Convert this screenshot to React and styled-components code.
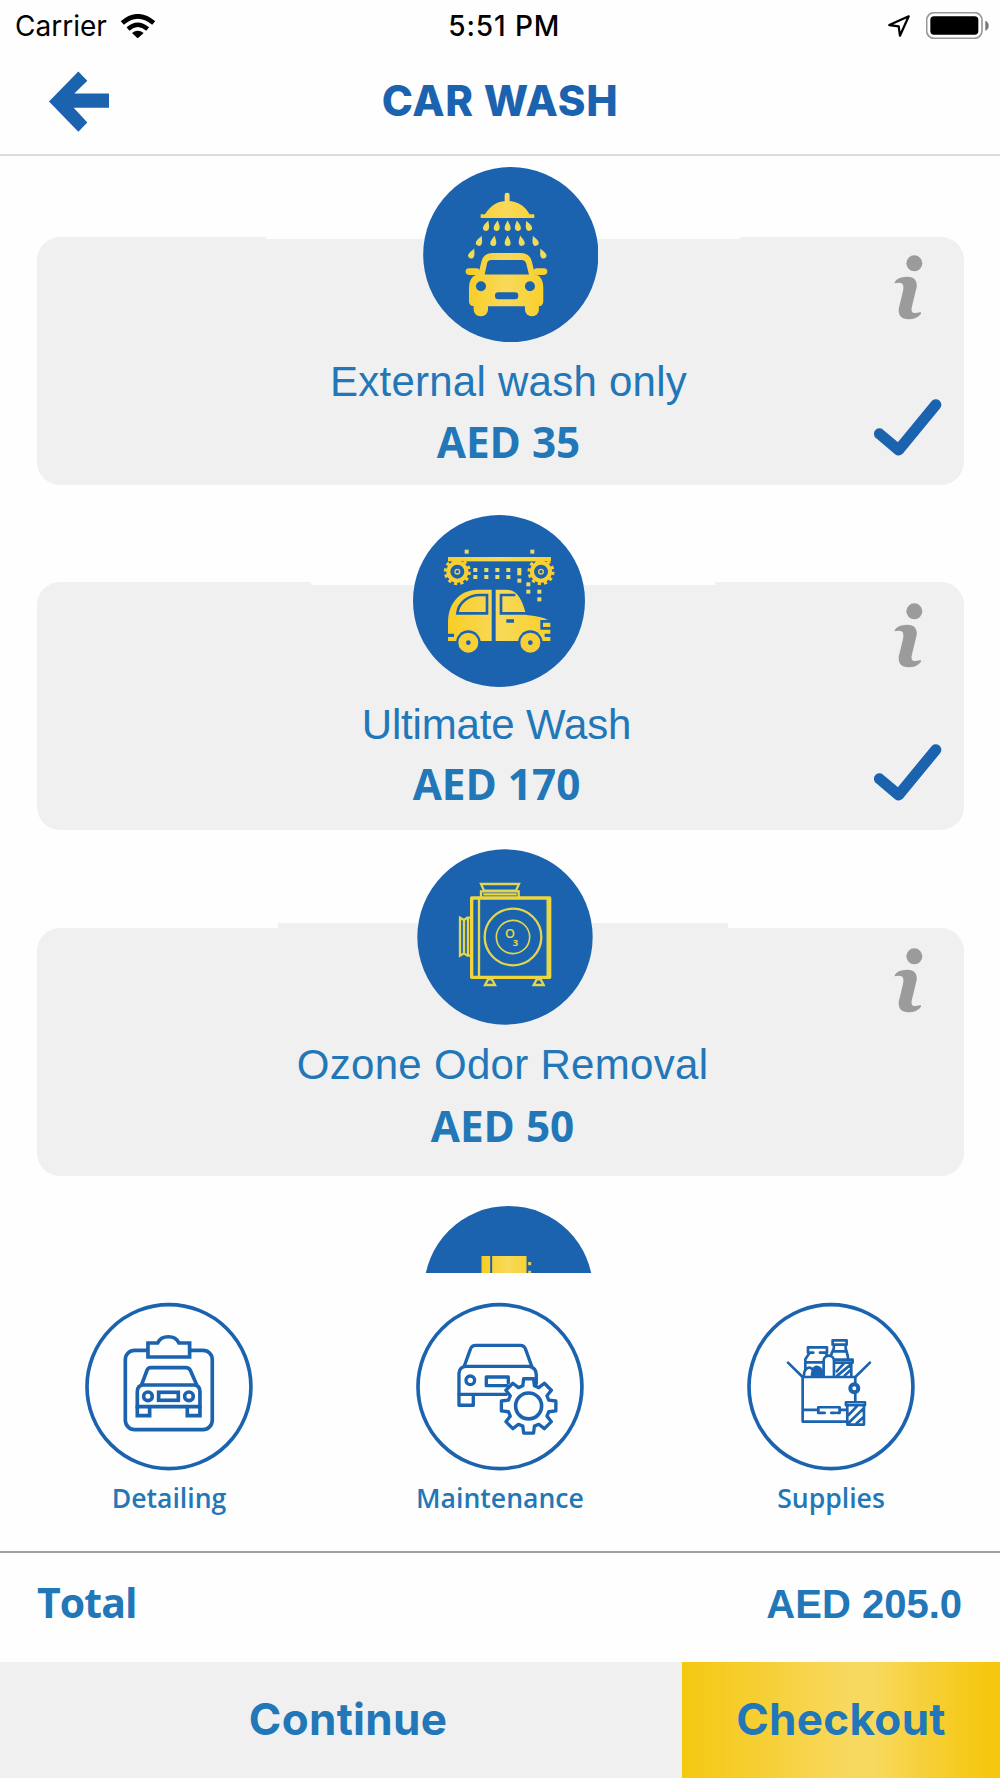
import React from "react"
import styled, { createGlobalStyle, ThemeProvider } from "styled-components"

const theme = {
  color: {
    primary: "#1b63af",
    text: "#2277b8",
    card: "#f0f0f0",
    info: "#9b9b9b",
    gold: "#f8d035",
  },
  font: {
    system: '"Inter", "Liberation Sans", sans-serif',
    body: '"Open Sans", "Noto Sans", sans-serif',
    light: '"Liberation Sans", Arial, sans-serif',
  },
}

const GlobalStyle = createGlobalStyle`
  * {
    box-sizing: border-box;
  }
  body {
    margin: 0;
    background: #fefefe;
  }
  svg {
    display: block;
    flex-shrink: 0;
  }
`

const Screen = styled.div`
  display: flex;
  flex-direction: column;
  width: 1000px;
  height: 1778px;
  overflow: hidden;
  font-family: ${props => props.theme.font.system};
`

const StatusBar = styled.div`
  display: grid;
  grid-template-columns: 1fr auto 1fr;
  align-items: center;
  height: 51px;
  padding: 0 11.5px 0 15px;
  font-size: 28px;
  line-height: 36px;
  color: #000;
`

const StatusGroup = styled.div`
  display: flex;
  align-items: center;
  justify-content: ${props => (props.$end ? "flex-end" : "flex-start")};
  gap: ${props => props.$gap}px;
`

const Clock = styled.div`
  margin-left: 5px;
  font-weight: 550;
  letter-spacing: 0.9px;
`

const Header = styled.header`
  display: grid;
  grid-template-columns: 120px 1fr 120px;
  align-items: center;
  height: 105px;
  padding-bottom: 3px;
  border-bottom: 2px solid #dcdcdc;
`

const BackButton = styled.button`
  padding: 0 0 0 49px;
  border: 0;
  background: none;
`

const Title = styled.h1`
  margin: 0;
  font-size: 42px;
  font-weight: 800;
  line-height: 50px;
  letter-spacing: 0.7px;
  text-align: center;
  color: ${props => props.theme.color.primary};
`

const ServiceList = styled.main`
  display: flex;
  flex-direction: column;
  gap: 97.33px;
  height: 1117px;
  padding: 81px 36.5px 0;
  overflow: hidden;
`

const Card = styled.section`
  position: relative;
  display: grid;
  grid-template-columns: 110px 1fr 110px;
  flex-shrink: 0;
  height: 248px;
  border-radius: 23px;
  background: ${props => props.theme.color.card};

  /* the edge of the artwork shows on the top of each card */
  &::before {
    content: "";
    position: absolute;
    top: ${props => (props.$edge.raised ? -props.$edge.height : 0)}px;
    left: ${props => props.$edge.left}px;
    width: ${props => props.$edge.width}px;
    height: ${props => props.$edge.height}px;
    background: ${props => (props.$edge.raised ? props.theme.color.card : "#fefefe")};
  }
`

const CardBody = styled.div`
  position: relative;
  grid-column: 2;
  display: flex;
  flex-direction: column;
  align-items: center;
  margin-top: ${props => props.$lift}px;
  margin-left: ${props => props.$shift * 2}px;
`

const Artwork = styled.div`
  margin-left: ${props => props.$shift * 2}px;
`

const CardActions = styled.div`
  grid-column: 3;
  display: flex;
  flex-direction: column;
  align-items: flex-end;
  justify-content: space-between;
  padding: ${props => props.$top}px 21.5px 29.5px 0;
`

const InfoSlot = styled.div`
  padding-right: 19px;
`

const ServiceName = styled.h2`
  margin: ${props => props.$gap}px 0 0;
  font-family: ${props => props.theme.font.light};
  font-size: 42px;
  font-weight: 400;
  line-height: 50px;
  letter-spacing: ${props => props.$spacing}px;
  white-space: nowrap;
  color: ${props => props.theme.color.text};
`

const Price = styled.div`
  margin-top: ${props => props.$gap}px;
  font-family: ${props => props.theme.font.body};
  font-size: 42.3px;
  font-weight: 700;
  line-height: 50px;
  color: ${props => props.theme.color.text};
`

const Categories = styled.nav`
  display: grid;
  grid-template-columns: repeat(3, 331px);
  justify-content: center;
  height: 278px;
  padding-top: 29px;
`

const Category = styled.div`
  display: flex;
  flex-direction: column;
  align-items: center;
`

const CategoryName = styled.span`
  margin-top: 9px;
  font-family: ${props => props.theme.font.body};
  font-size: 26.6px;
  font-weight: 600;
  line-height: 36px;
  color: ${props => props.theme.color.text};
`

const TotalRow = styled.div`
  display: flex;
  align-items: baseline;
  justify-content: space-between;
  height: 111px;
  padding: 21px 38px 0 37px;
  border-top: 2px solid #a0a0a0;
  color: ${props => props.theme.color.text};
`

const TotalLabel = styled.span`
  font-family: ${props => props.theme.font.body};
  font-size: 41px;
  font-weight: 700;
  line-height: 56px;
  letter-spacing: -0.9px;
`

const TotalValue = styled.span`
  font-family: ${props => props.theme.font.light};
  font-size: 40px;
  font-weight: 700;
  line-height: 56px;
`

const Footer = styled.footer`
  display: grid;
  grid-template-columns: 682px 318px;
  height: 116px;
`

const FooterButton = styled.button`
  border: 0;
  padding: 0 0 2px ${props => props.$inset || 0}px;
  background: ${props =>
    props.$gold
      ? "linear-gradient(90deg, #f5c812 0%, #f6cf35 25%, #f8d95f 52%, #f8d95f 60%, #f6cf35 78%, #f5c80f 96%)"
      : props.theme.color.card};
  font-family: ${props => props.theme.font.system};
  font-size: 44px;
  font-weight: 700;
  line-height: 50px;
  letter-spacing: 0.3px;
  color: ${props => props.theme.color.text};
`

const WifiIcon = () => (
  <svg width="34" height="24" viewBox="363 36 102 72" fill="none" stroke="#000">
    <path d="M367 63 Q413 23 461 63" strokeWidth="14" />
    <path d="M384 81 Q413 56 443 81" strokeWidth="13" />
    <path d="M396 93 Q413 79 431 93 L413 109 Z" fill="#000" stroke="none" />
  </svg>
)

const LocationIcon = () => (
  <svg width="22" height="22" viewBox="1163 40 68 68" fill="none" stroke="#000" strokeWidth="7" strokeLinejoin="round">
    <path d="M1227 44 L1167 71 L1196 75 L1200 104 Z" />
  </svg>
)

const BatteryIcon = () => (
  <svg width="63" height="27" viewBox="1276 32 189 81">
    <rect x="1278" y="34" width="166" height="77" rx="22" fill="none" stroke="#999" strokeWidth="5" />
    <rect x="1289" y="45" width="144" height="55" rx="11" />
    <path d="M1454 58 Q1464 62 1464 73 Q1464 84 1454 88 Z" fill="#777" />
  </svg>
)

const BackIcon = () => (
  <svg width="60" height="61" viewBox="147 214 180 182" fill={theme.color.primary}>
    <path d="M147 305 L235 215 L262 243 L223 281 H327 V324 H221 L262 368 L235 396 Z" />
  </svg>
)

const InfoIcon = () => (
  <svg width="29" height="65" viewBox="163 104 87 195" fill={theme.color.info}>
    <circle cx="224" cy="129" r="24" />
    <path d="M165 186 Q172 170 203 169 Q234 170 231 200 L216 262 Q213 277 225 278 Q234 278 243 275 L244 280 Q232 297 206 297 Q175 296 177 266 L190 212 Q194 194 186 189 Q178 185 165 189 Z" />
  </svg>
)

const CheckIcon = () => (
  <svg width="68" height="57" viewBox="104 536 202 170" fill="none">
    <path
      d="M120 640 L177 688 L288 553"
      stroke={theme.color.primary}
      strokeWidth="33"
      strokeLinecap="round"
      strokeLinejoin="round"
    />
  </svg>
)

const GoldGradient = ({ id, from, to }) => (
  <defs>
    <linearGradient id={id} gradientUnits="userSpaceOnUse" x1={from} x2={to} y1="0" y2="0">
      <stop offset="0" stopColor="#f8cd22" />
      <stop offset="0.5" stopColor="#f8d95a" />
      <stop offset="1" stopColor="#f9cf26" />
    </linearGradient>
  </defs>
)

const drops = [
  [261, 212, 18], [292, 212, 8], [324, 212, 0], [354, 212, -8], [386, 212, -22],
  [240, 257, 22], [282, 257, 10], [324, 257, 0], [365, 257, -12], [406, 257, -22],
  [217, 295, 24], [429, 295, -24],
]

const ExternalWashIcon = () => (
  <svg width="175.6" height="175.6" viewBox="70 35 527 527">
    <GoldGradient id="external" from="198" to="443" />
    <circle cx="333.5" cy="298" r="263" fill={theme.color.primary} />
    <g fill="url(#external)">
      <rect x="315" y="112" width="15" height="32" rx="7" />
      <path d="M243 177 H256 Q280 137 323 137 Q367 137 390 177 H404 V188 H243 Z" />
      <rect x="198" y="339" width="42" height="20" rx="10" />
      <rect x="402" y="339" width="41" height="20" rx="10" />
      <path d="M234 365 L245 320 Q251 293 280 293 H362 Q391 293 397 320 L408 365 Z" />
      <path d="M232 357 H409 Q431 366 431 397 V438 Q431 453 416 453 H224 Q208 453 208 438 V397 Q208 366 232 357 Z" />
      <rect x="222" y="430" width="43" height="53" rx="20" />
      <rect x="376" y="430" width="42" height="53" rx="20" />
    </g>
    <g fill="#f1dc57">
      {drops.map(([x, y, angle]) => (
        <path
          key={`${x}-${y}`}
          transform={`translate(${x} ${y}) rotate(${angle})`}
          d="M0 -17 C3 -9 9 -2 9 6 A9 9 0 0 1 -9 6 C-9 -2 -3 -9 0 -17 Z"
        />
      ))}
    </g>
    <g fill={theme.color.primary}>
      <path d="M274 314 H366 Q377 314 380 325 L388 358 H255 L262 325 Q264 314 274 314 Z" />
      <circle cx="244" cy="393" r="15" />
      <circle cx="391" cy="393" r="15" />
      <rect x="286" y="411" width="70" height="21" rx="10" />
    </g>
  </svg>
)

const waterDots = [
  [219, 187], [252, 187], [285, 187], [318, 187], [351, 187], [351, 197],
  [219, 208], [252, 208], [285, 208], [318, 208], [351, 219],
  [378, 230], [378, 252], [411, 252], [411, 275], [193, 132], [390, 132],
]

const UltimateWashIcon = () => (
  <svg width="172" height="172" viewBox="38 28 516 516">
    <GoldGradient id="ultimate" from="133" to="460" />
    <circle cx="296" cy="286" r="258" fill={theme.color.primary} />
    <g fill="url(#ultimate)">
      <rect x="143" y="154" width="309" height="13" />
      <path d="M143 406 V345 C145 292 178 253 232 252 H274 V406 Z" />
      <path d="M286 252 H320 C352 254 365 282 378 328 C412 332 444 336 450 352 V406 H286 Z" />
    </g>
    <g fill="#ecdc66">
      {waterDots.map(([x, y]) => (
        <rect key={`${x}-${y}`} x={x} y={y} width="12" height="12" />
      ))}
    </g>
    {[171, 422].map(x => (
      <g key={x} fill="none" stroke={theme.color.gold}>
        <circle cx={x} cy="198" r="36" strokeWidth="9" strokeDasharray="9.5 9.35" />
        <circle cx={x} cy="198" r="27" strokeWidth="12" />
        <circle cx={x} cy="198" r="7" strokeWidth="4" />
      </g>
    ))}
    <g fill="none" stroke={theme.color.primary} strokeWidth="8">
      <path d="M171 323 C174 292 204 268 238 268 H260 V323 Z" />
      <path d="M345 268 H302 V323 H385" />
      <path d="M452 347 H424 V368 H452" />
      <path d="M318 346 H341 M143 389 H161 M433 389 H452" strokeWidth="10" />
    </g>
    {[204, 390].map(x => (
      <g key={x}>
        <circle cx={x} cy="411" r="37" fill={theme.color.primary} />
        <circle cx={x} cy="411" r="30" fill={theme.color.gold} />
        <circle cx={x} cy="411" r="7" fill={theme.color.primary} />
      </g>
    ))}
  </svg>
)

const OzoneIcon = () => (
  <svg width="176" height="176" viewBox="51 27 528 528">
    <circle cx="315" cy="291" r="263" fill={theme.color.primary} />
    <g fill="none" stroke="#e3d64e" strokeWidth="7">
      <path d="M243 132 H357 L348 152 H252 Z" />
      <path d="M243 172 V154 H356 V172 M250 163 H350" />
      <path d="M215 174 H449 V412 H215 Z" strokeWidth="10" stroke="#f0d63a" strokeLinejoin="round" />
      <path d="M237 176 V410 M443 176 V410" />
      <circle cx="339" cy="291" r="85" />
      <circle cx="339" cy="291" r="50" strokeWidth="5" />
      <path d="M211 233 H202 L192 240 L180 233 V347 L192 340 L202 347 H211 M192 240 V340 M204 235 V345" />
      <path d="M264 418 H276 L285 435 H255 Z M410 418 H422 L431 435 H401 Z" />
    </g>
    <g fill="#e9d84c" fontFamily="Open Sans, sans-serif" fontWeight="600">
      <text x="315" y="293" fontSize="38">O</text>
      <text x="338" y="317" fontSize="28" fontWeight="700">3</text>
    </g>
  </svg>
)

const FilterIcon = () => (
  <svg width="169" height="169" viewBox="71.5 48 507 507">
    <GoldGradient id="filter" from="244" to="400" />
    <circle cx="325" cy="301.5" r="253.5" fill={theme.color.primary} />
    <path d="M244 198 H270 V300 H244 Z M276 198 H379 V300 H276 Z" fill="url(#filter)" />
    <path d="M384 216 H393 V226 H384 Z M384 242 H393 V251 H384 Z M400 249 H422 V300 H400 Z" fill="#d8d257" />
  </svg>
)

const Ring = () => <circle cx="299" cy="291" r="246" strokeWidth="11" />

const LineIcon = ({ children }) => (
  <svg
    width="168.6"
    height="168.6"
    viewBox="47 37 506 506"
    overflow="visible"
    fill="none"
    stroke={theme.color.primary}
    strokeWidth="11"
    strokeLinejoin="round"
    strokeLinecap="round"
  >
    <Ring />
    {children}
  </svg>
)

const DetailingIcon = () => (
  <LineIcon>
    <rect x="168" y="182" width="261" height="238" rx="28" />
    <path d="M236 160 H265 C276 135 318 135 329 160 H361 V202 H236 Z" fill="#fefefe" strokeLinejoin="miter" />
    <path d="M217 285 L233 242 Q236 234 245 234 H350 Q359 234 363 242 L382 285" />
    <path d="M204 351 V306 Q204 286 224 286 H372 Q392 286 392 306 V351 Z" strokeLinejoin="miter" />
    <path d="M204 351 V378 H241 V351 M392 351 V378 H354 V351" strokeLinejoin="miter" />
    <circle cx="236" cy="320" r="13" />
    <circle cx="359" cy="320" r="13" />
    <rect x="268" y="308" width="59" height="24" strokeLinejoin="miter" />
  </LineIcon>
)

const gearPoints = () => {
  const points = []
  for (let i = 0; i < 8; i++) {
    const base = (i * Math.PI) / 4
    ;[[-0.28, 63], [-0.18, 83], [0.18, 83], [0.28, 63]].forEach(([offset, radius]) => {
      const x = 385 + Math.cos(base + offset) * radius
      const y = 349 + Math.sin(base + offset) * radius
      points.push(`${x.toFixed(1)},${y.toFixed(1)}`)
    })
  }
  return points.join(" ")
}

const MaintenanceIcon = () => (
  <LineIcon>
    <g strokeWidth="10">
      <path d="M192 229 L210 179 Q214 167 226 167 H360 Q372 167 376 179 L394 229" />
      <path d="M318 314 H176 V250 Q178 230 200 230 H386 Q408 233 408 256 V282" />
      <path d="M176 314 V347 H219 V316" />
      <circle cx="210" cy="272" r="13" />
      <path d="M320 262 H258 V288 H320" />
      <path d="M324 262 V280" />
      <polygon points={gearPoints()} fill="#fefefe" />
      <circle cx="385" cy="349" r="39" strokeWidth="11" />
    </g>
  </LineIcon>
)

const SuppliesIcon = () => (
  <LineIcon>
    <g strokeWidth="8" transform="translate(-4 1)">
      <path d="M174 218 L218 261 H376 L420 218" />
      <path d="M218 261 V395 H350 M218 360 H264 M330 360 H350 M376 261 V280 M376 310 V335" />
      <path d="M315 369 H304 M284 369 H265 V352 H329 V369 H322" />
      <circle cx="373" cy="295" r="12" strokeWidth="12" />
      <path d="M234 172 H291 V188 H270 M234 172 V188 H250 M238 190 L226 208 V240 M288 190 L292 198 M228 217 H276" />
      <path d="M281 258 V212 C281 192 312 192 312 212 V258" />
      <path d="M308 151 H350 V164 H308 Z M312 166 C314 180 305 185 304 194 M347 166 C345 182 354 188 354 205 M308 184 H350" />
      <path d="M314 209 H368 V218 H316 M364 218 V258 M320 244 L342 220 M322 257 L362 224 M344 257 L362 240" />
      <path d="M222 256 C222 230 244 228 248 240 C258 224 276 230 278 256" />
      <path d="M246 256 C246 228 276 226 278 256 Z" fill={theme.color.primary} />
      <path d="M348 337 H405 V346 H348 Z M352 348 V404 H402 V348 M355 376 L380 350 M355 400 L400 356 M380 400 L400 382" />
    </g>
  </LineIcon>
)

const services = [
  {
    name: "External wash only",
    price: "AED 35",
    icon: ExternalWashIcon,
    selected: true,
    layout: { lift: -70.5, shift: 8.5, iconShift: 2, nameGap: 14.5, priceGap: 10, spacing: 0.25, infoTop: 18 },
    edge: { left: 229.5, width: 474, height: 2 },
  },
  {
    name: "Ultimate Wash",
    price: "AED 170",
    icon: UltimateWashIcon,
    selected: true,
    layout: { lift: -67.5, shift: -3.5, iconShift: 2, nameGap: 13.5, priceGap: 9, spacing: -0.15, infoTop: 20.5 },
    edge: { left: 274.5, width: 404, height: 3 },
  },
  {
    name: "Ozone Odor Removal",
    price: "AED 50",
    icon: OzoneIcon,
    selected: false,
    layout: { lift: -78.5, shift: 2.5, iconShift: 2, nameGap: 15, priceGap: 10.5, spacing: 0.3, infoTop: 20 },
    edge: { left: 241.5, width: 450, height: 5, raised: true },
  },
  {
    name: "",
    price: "",
    icon: FilterIcon,
    selected: false,
    layout: { lift: -66.5, shift: 8, iconShift: 0, nameGap: 14, priceGap: 10, spacing: 0, infoTop: 20 },
    edge: { left: 241, width: 450, height: 0 },
  },
]

const categories = [
  { name: "Detailing", icon: DetailingIcon },
  { name: "Maintenance", icon: MaintenanceIcon },
  { name: "Supplies", icon: SuppliesIcon },
]

const ServiceCard = ({ name, price, icon: Icon, selected, layout, edge }) => {
  return (
    <Card $edge={edge}>
      <CardBody $lift={layout.lift} $shift={layout.shift}>
        <Artwork $shift={layout.iconShift}>
          <Icon />
        </Artwork>
        <ServiceName $gap={layout.nameGap} $spacing={layout.spacing}>{name}</ServiceName>
        <Price $gap={layout.priceGap}>{price}</Price>
      </CardBody>
      <CardActions $top={layout.infoTop}>
        <InfoSlot>
          <InfoIcon />
        </InfoSlot>
        {selected && <CheckIcon />}
      </CardActions>
    </Card>
  )
}

const App = () => {
  return (
    <ThemeProvider theme={theme}>
      <GlobalStyle />
      <Screen>
        <StatusBar>
          <StatusGroup $gap={14}>
            Carrier
            <WifiIcon />
          </StatusGroup>
          <Clock>5:51 PM</Clock>
          <StatusGroup $end $gap={16}>
            <LocationIcon />
            <BatteryIcon />
          </StatusGroup>
        </StatusBar>
        <Header>
          <BackButton aria-label="Back">
            <BackIcon />
          </BackButton>
          <Title>CAR WASH</Title>
        </Header>
        <ServiceList>
          {services.map((service, index) => (
            <ServiceCard key={index} {...service} />
          ))}
        </ServiceList>
        <Categories>
          {categories.map(({ name, icon: Icon }) => (
            <Category key={name}>
              <Icon />
              <CategoryName>{name}</CategoryName>
            </Category>
          ))}
        </Categories>
        <TotalRow>
          <TotalLabel>Total</TotalLabel>
          <TotalValue>AED 205.0</TotalValue>
        </TotalRow>
        <Footer>
          <FooterButton $inset={14}>Continue</FooterButton>
          <FooterButton $gold>Checkout</FooterButton>
        </Footer>
      </Screen>
    </ThemeProvider>
  )
}

export default App
